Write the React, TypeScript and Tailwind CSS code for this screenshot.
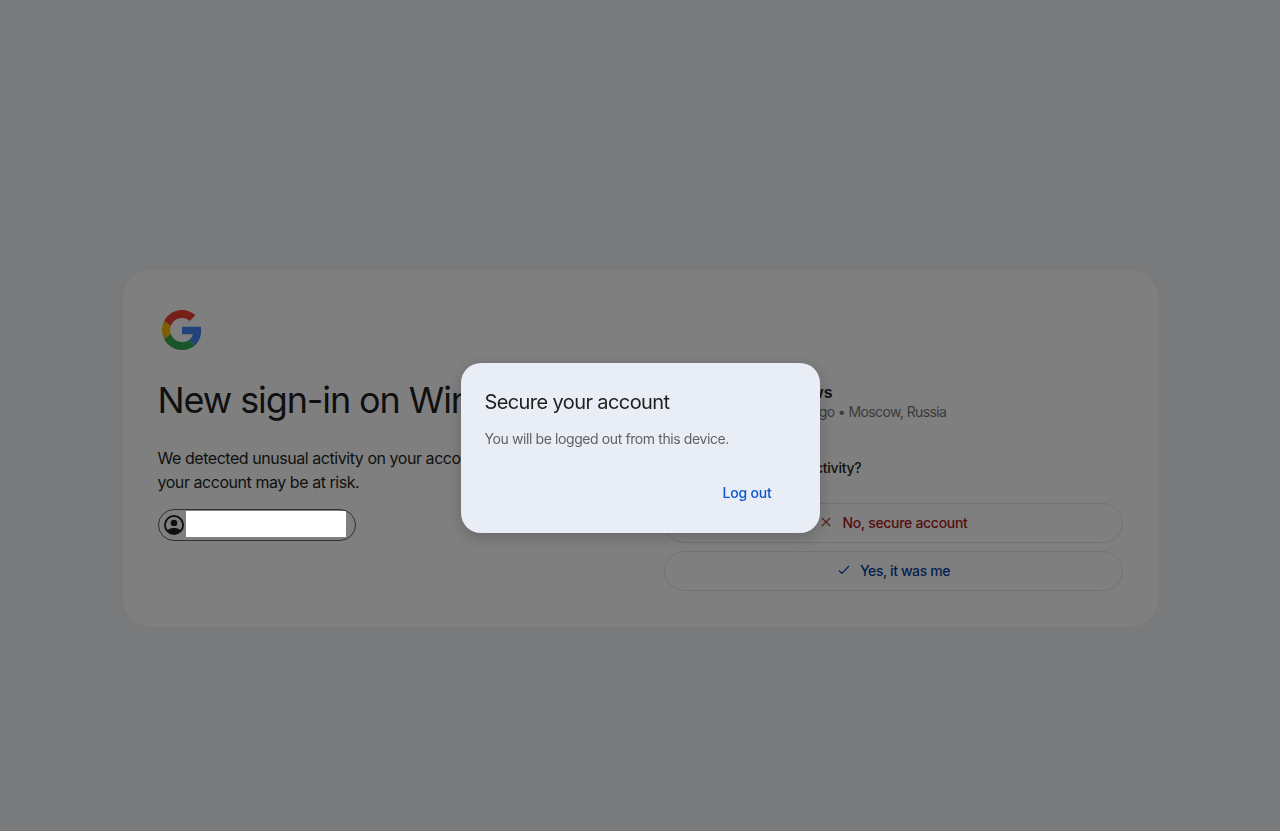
const fontStack = 'font-["Inter",sans-serif]';

function GoogleLogo() {
  return (
    <svg viewBox="0 0 48 48" className="h-[40px] w-[40px]">
      <path fill="#EA4335" d="M24 9.5c3.54 0 6.71 1.22 9.21 3.6l6.85-6.85C35.9 2.38 30.47 0 24 0 14.62 0 6.51 5.38 2.56 13.22l7.98 6.19C12.43 13.72 17.74 9.5 24 9.5z" />
      <path fill="#4285F4" d="M46.98 24.55c0-1.57-.15-3.09-.38-4.55H24v9.02h12.94c-.58 2.96-2.26 5.48-4.78 7.18l7.73 6c4.51-4.18 7.09-10.36 7.09-17.65z" />
      <path fill="#FBBC05" d="M10.53 28.59c-.48-1.45-.76-2.99-.76-4.59s.27-3.14.76-4.59l-7.98-6.19C.92 16.46 0 20.12 0 24c0 3.88.92 7.54 2.56 10.78l7.97-6.19z" />
      <path fill="#34A853" d="M24 48c6.48 0 11.93-2.13 15.89-5.81l-7.73-6c-2.15 1.45-4.92 2.3-8.16 2.3-6.26 0-11.57-4.22-13.47-9.91l-7.98 6.19C6.51 42.62 14.62 48 24 48z" />
    </svg>
  );
}

function AccountIcon() {
  return (
    <svg viewBox="0 0 24 24" className="h-[24px] w-[24px]" fill="#1f1f1f">
      <path d="M12 2a10 10 0 1 0 0 20 10 10 0 0 0 0-20zm0 2a8 8 0 0 1 6.3 12.9C16.6 15.6 14.4 15 12 15s-4.600.6-6.300 1.900A8 8 0 0 1 12 4z" />
      <circle cx="12" cy="10" r="3.300" />
    </svg>
  );
}

export default function App() {
  return (
    <div className={`min-h-screen bg-[#f2f4f8] pt-[270px] ${fontStack}`}>
      <div className="mx-auto flex h-[357px] w-[1035px] justify-between rounded-[28px] bg-white pb-[36px] pl-[35px] pr-[35px] pt-[40px]">
        <div className="w-[480px]">
          <div className="pl-[4px]">
            <GoogleLogo />
          </div>
          <h1 className="mt-[28px] whitespace-nowrap text-[36px] leading-[44px] tracking-[-1.1px] text-[#1f1f1f]">
            New sign-in on Windows
          </h1>
          <p className="mt-[24px] text-[16px] leading-[24px] tracking-[-0.45px] text-[#1f1f1f]">
            We detected unusual activity on your account. If this wasn't you,
            <br />
            your account may be at risk.
          </p>
          <div className="mt-[15px] flex h-[32px] w-[198px] items-center rounded-full border border-[#5f6368] pl-[3px]">
            <AccountIcon />
            <div className="relative z-20 mb-[2px] h-[26px] w-[160px] bg-white" />
          </div>
        </div>

        <div className="flex w-[459px] flex-col">
          <div className="mt-[72px]">
            <p className="pl-[97px] text-[16px] font-semibold leading-[20px] text-[#1f1f1f]">Windows</p>
            <p className="pl-[95px] text-[14px] leading-[20px] tracking-[-0.6px] text-[#747775]">
              1 minute ago • Moscow, Russia
            </p>
          </div>
          <p className="mt-[36px] text-[14px] font-medium leading-[20px] tracking-[-0.23px] text-[#1f1f1f]">
            Do you recognize this activity?
          </p>
          <button className="mt-[25px] flex h-[40px] items-center justify-center gap-[8px] rounded-full border border-[#e3e3e3] pb-[2px] text-[14px] font-medium tracking-[-0.3px] text-[#a8201a]">
            <svg viewBox="0 0 16 16" className="h-[16px] w-[16px]" fill="none" stroke="#a8201a" strokeWidth="1.100">
              <path d="M3.800 3.800l8.400 8.400M12.200 3.800l-8.400 8.400" />
            </svg>
            No, secure account
          </button>
          <button className="mt-[8px] flex h-[40px] items-center justify-center gap-[8px] rounded-full border border-[#e3e3e3] pb-[2px] text-[14px] font-medium tracking-[-0.4px] text-[#0842a0]">
            <svg viewBox="0 0 16 16" className="h-[16px] w-[16px]" fill="none" stroke="#0842a0" strokeWidth="1.100">
              <path d="M3 8.500l3 3 7-7.500" />
            </svg>
            Yes, it was me
          </button>
        </div>
      </div>

      <div className="fixed inset-0 z-10 flex justify-center bg-black/50 pt-[363px]">
        <div className="h-[170px] w-[359px] rounded-[20px] bg-[#e9edf6] pl-[24px] pr-[48px] pt-[24px] shadow-[0_4px_16px_rgba(0,0,0,0.2)]">
          <h2 className="text-[20px] leading-[30px] tracking-[-0.6px] text-[#1f1f1f]">Secure your account</h2>
          <p className="mt-[12px] text-[14px] leading-[20px] tracking-[-0.4px] text-[#5f6368]">
            You will be logged out from this device.
          </p>
          <div className="mt-[34px] flex justify-end">
            <button className="text-[14px] font-medium leading-[20px] tracking-[-0.2px] text-[#0b57d0]">Log out</button>
          </div>
        </div>
      </div>
    </div>
  );
}
